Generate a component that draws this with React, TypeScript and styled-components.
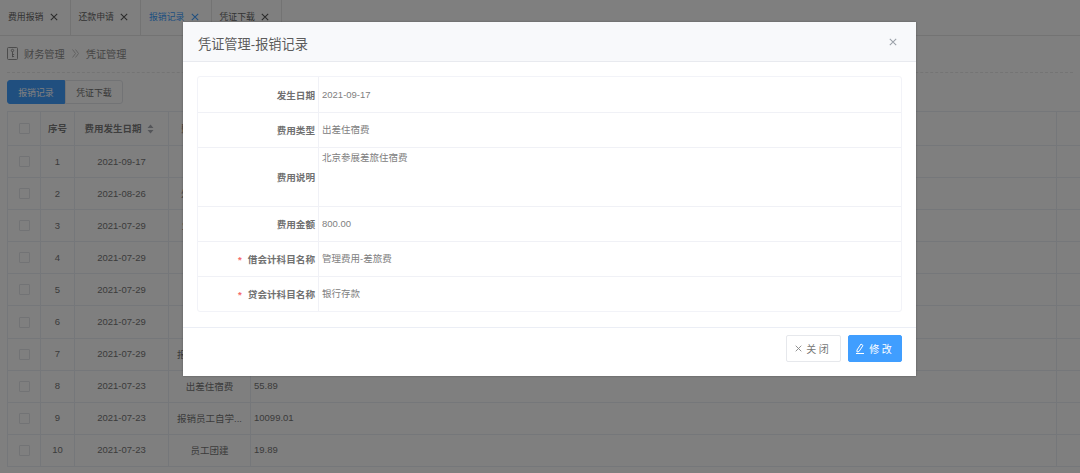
import styled, { createGlobalStyle } from "styled-components";

const Global = createGlobalStyle`
  html, body { margin: 0; padding: 0; }
  body {
    width: 1080px;
    height: 473px;
    overflow: hidden;
    background: #fff;
    font-family: "Liberation Sans", "Noto Sans CJK SC", sans-serif;
    color: #606266;
  }
`;

const Page = styled.div`
  position: relative;
  width: 1080px;
  height: 473px;
  overflow: hidden;
`;

const TabBar = styled.div`
  display: flex;
  height: 35px;
  border-bottom: 1px solid #e6e6e6;
`;

const Tab = styled.div<{ $active?: boolean }>`
  display: flex;
  align-items: center;
  gap: 6px;
  width: 70.5px;
  padding: 0 0 2px 8px;
  box-sizing: border-box;
  border-right: 1px solid #e6e6e6;
  font-size: 8.9px;
  color: ${(p) => (p.$active ? "#409eff" : "#666")};
`;

const Crumbs = styled.div`
  display: flex;
  align-items: center;
  gap: 6px;
  height: 34px;
  padding-bottom: 2px;
  margin: 0 7px;
  border-bottom: 1px dashed #e8e8e8;
  font-size: 10.2px;
  color: #8c8c8c;
`;

const Toolbar = styled.div`
  display: flex;
  padding: 7px 7px 0;
`;

const ToolButton = styled.div<{ $active?: boolean }>`
  display: flex;
  align-items: center;
  justify-content: center;
  box-sizing: border-box;
  width: 58px;
  height: 24px;
  font-size: 8.9px;
  border: 1px solid ${(p) => (p.$active ? "#409eff" : "#e4e6eb")};
  border-radius: ${(p) => (p.$active ? "3px 0 0 3px" : "0 3px 3px 0")};
  background: ${(p) => (p.$active ? "#409eff" : "#fff")};
  color: ${(p) => (p.$active ? "#fff" : "#707070")};
`;

const Table = styled.table`
  margin: 7px 0 0 7px;
  width: 1084px;
  border-collapse: collapse;
  table-layout: fixed;
  font-size: 9.5px;
  color: #777;

  th, td {
    border: 1px solid #ebeef5;
    height: 30.1px;
    padding: 0 0 1px;
    text-align: center;
    white-space: nowrap;
    overflow: hidden;
  }
  th { height: 32px; font-weight: 700; color: #7d7d7d; }
`;

const AmountCell = styled.td`
  && { text-align: left; padding-left: 3px; }
`;

const Check = styled.span`
  display: inline-block;
  box-sizing: border-box;
  width: 11px;
  height: 11px;
  vertical-align: middle;
  border: 1px solid #e4e6eb;
  border-radius: 1px;
  background: #fff;
`;

const SortMark = styled.svg`
  margin: 0 5px;
  vertical-align: middle;
`;

const Mask = styled.div`
  position: absolute;
  inset: 0;
  background: rgba(0, 0, 0, 0.5);
`;

const Dialog = styled.div`
  position: absolute;
  left: 183px;
  top: 22px;
  width: 733px;
  height: 354px;
  display: flex;
  flex-direction: column;
  background: #fff;
  box-shadow: 0 0 2px rgba(0, 0, 0, 0.3);
`;

const DialogHead = styled.div`
  display: flex;
  align-items: center;
  justify-content: space-between;
  box-sizing: border-box;
  height: 40px;
  padding: 0 19px 0 15px;
  background: #f8f9fb;
  border-bottom: 1px solid #e8eaef;
  font-size: 13.2px;
  color: #5c5c5c;
`;

const DialogTitle = styled.span`
  margin-top: 4px;
`;

const DialogBody = styled.div`
  padding: 14px 14px 15px;
  border-bottom: 1px solid #ebeef5;
`;

const Form = styled.div`
  border: 1px solid #f2f3f8;
  border-radius: 3px;
`;

const FormRow = styled.div<{ $tall?: boolean }>`
  display: flex;
  box-sizing: border-box;
  height: ${(p) => (p.$tall ? 59 : 35)}px;
  & + & { border-top: 1px solid #f0f1f6; }
`;

const FormLabel = styled.div`
  display: flex;
  align-items: center;
  justify-content: flex-end;
  flex: none;
  width: 121px;
  box-sizing: border-box;
  padding-right: 3px;
  border-right: 1px solid #f0f1f6;
  font-size: 9.6px;
  font-weight: 700;
  color: #707070;
`;

const Required = styled.span`
  margin-right: 6px;
  color: #f56c6c;
`;

const FormValue = styled.div<{ $top?: boolean }>`
  display: flex;
  align-items: ${(p) => (p.$top ? "flex-start" : "center")};
  padding: ${(p) => (p.$top ? "3px" : "0")} 0 0 3px;
  font-size: 9.5px;
  line-height: 14px;
  color: #808080;
`;

const DialogFoot = styled.div`
  display: flex;
  justify-content: flex-end;
  align-items: flex-start;
  gap: 7px;
  flex: 1;
  padding: 7px 14px 0;
`;

const FootButton = styled.div<{ $primary?: boolean }>`
  display: flex;
  align-items: center;
  justify-content: center;
  gap: 4px;
  width: 54.5px;
  height: 27px;
  box-sizing: border-box;
  border: 1px solid ${(p) => (p.$primary ? "#409eff" : "#e6e8ec")};
  border-radius: 2px;
  background: ${(p) => (p.$primary ? "#409eff" : "#fff")};
  color: ${(p) => (p.$primary ? "#fff" : "#777")};
  font-size: 10px;
  letter-spacing: 2.5px;
`;

const CloseX = ({ size = 8, color = "#444" }: { size?: number; color?: string }) => (
  <svg width={size} height={size} viewBox="0 0 10 10" fill="none" stroke={color} strokeWidth="1.3">
    <path d="M1 1l8 8M9 1l-8 8" />
  </svg>
);

const rows = [
  { no: 1, date: "2021-09-17", type: "", amount: "" },
  { no: 2, date: "2021-08-26", type: "外部咨询服务", amount: "" },
  { no: 3, date: "2021-07-29", type: "业务招待费...", amount: "" },
  { no: 4, date: "2021-07-29", type: "", amount: "" },
  { no: 5, date: "2021-07-29", type: "", amount: "" },
  { no: 6, date: "2021-07-29", type: "", amount: "" },
  { no: 7, date: "2021-07-29", type: "报销员工自学...", amount: "" },
  { no: 8, date: "2021-07-23", type: "出差住宿费", amount: "55.89" },
  { no: 9, date: "2021-07-23", type: "报销员工自学...", amount: "10099.01" },
  { no: 10, date: "2021-07-23", type: "员工团建", amount: "19.89" },
];

const tabs = ["费用报销", "还款申请", "报销记录", "凭证下载"];

function App() {
  return (
    <Page>
      <Global />
      <TabBar>
        {tabs.map((t, i) => (
          <Tab key={t} $active={i === 2}>
            {t}
            <CloseX color={i === 2 ? "#409eff" : "#555"} />
          </Tab>
        ))}
      </TabBar>
      <Crumbs>
        <svg width="11" height="13" viewBox="0 0 11 13" fill="none" stroke="#8c8c8c" strokeWidth="0.9">
          <rect x="0.5" y="0.5" width="10" height="12" rx="1" />
          <circle cx="5.5" cy="3.5" r="1.2" />
          <path d="M5.5 4.7v5.5M5.5 7.5h1.6M5.5 9.5h1.6" />
        </svg>
        财务管理
        <svg width="7" height="9" viewBox="0 0 7 9" fill="none" stroke="#c4c4c4" strokeWidth="1" style={{ margin: "0 1px 0 1px" }}>
          <path d="M0.5 0.5l3 4-3 4M3.5 0.5l3 4-3 4" />
        </svg>
        凭证管理
      </Crumbs>
      <Toolbar>
        <ToolButton $active>报销记录</ToolButton>
        <ToolButton>凭证下载</ToolButton>
      </Toolbar>
      <Table>
        <colgroup>
          <col width="33" />
          <col width="34" />
          <col width="94" />
          <col width="82" />
          <col width="806" />
          <col width="35" />
        </colgroup>
        <thead>
          <tr>
            <th><Check /></th>
            <th>序号</th>
            <th>
              费用发生日期
              <SortMark width="7" height="10" viewBox="0 0 7 10" fill="#a8abb2">
                <path d="M3.5 0.5L6.5 4H0.5zM3.5 9.5L0.5 6h6z" />
              </SortMark>
            </th>
            <th>费用类型名称</th>
            <th />
            <th />
          </tr>
        </thead>
        <tbody>
          {rows.map((r) => (
            <tr key={r.no}>
              <td><Check /></td>
              <td>{r.no}</td>
              <td>{r.date}</td>
              <td>{r.type}</td>
              <AmountCell>{r.amount}</AmountCell>
              <td />
            </tr>
          ))}
        </tbody>
      </Table>
      <Mask />
      <Dialog>
        <DialogHead>
          <DialogTitle>凭证管理-报销记录</DialogTitle>
          <CloseX size={8} color="#9aa0a8" />
        </DialogHead>
        <DialogBody>
          <Form>
            <FormRow>
              <FormLabel>发生日期</FormLabel>
              <FormValue>2021-09-17</FormValue>
            </FormRow>
            <FormRow>
              <FormLabel>费用类型</FormLabel>
              <FormValue>出差住宿费</FormValue>
            </FormRow>
            <FormRow $tall>
              <FormLabel>费用说明</FormLabel>
              <FormValue $top>北京参展差旅住宿费</FormValue>
            </FormRow>
            <FormRow>
              <FormLabel>费用金额</FormLabel>
              <FormValue>800.00</FormValue>
            </FormRow>
            <FormRow>
              <FormLabel><Required>*</Required>借会计科目名称</FormLabel>
              <FormValue>管理费用-差旅费</FormValue>
            </FormRow>
            <FormRow>
              <FormLabel><Required>*</Required>贷会计科目名称</FormLabel>
              <FormValue>银行存款</FormValue>
            </FormRow>
          </Form>
        </DialogBody>
        <DialogFoot>
          <FootButton>
            <CloseX size={7} color="#888" />
            关闭
          </FootButton>
          <FootButton $primary>
            <svg width="10" height="11" viewBox="0 0 10 11" fill="none" stroke="#fff" strokeWidth="1">
              <path d="M2 7l4-6 2 1.5-4 6-2 .5zM1 10.5h8" />
            </svg>
            修改
          </FootButton>
        </DialogFoot>
      </Dialog>
    </Page>
  );
}

export default App;
